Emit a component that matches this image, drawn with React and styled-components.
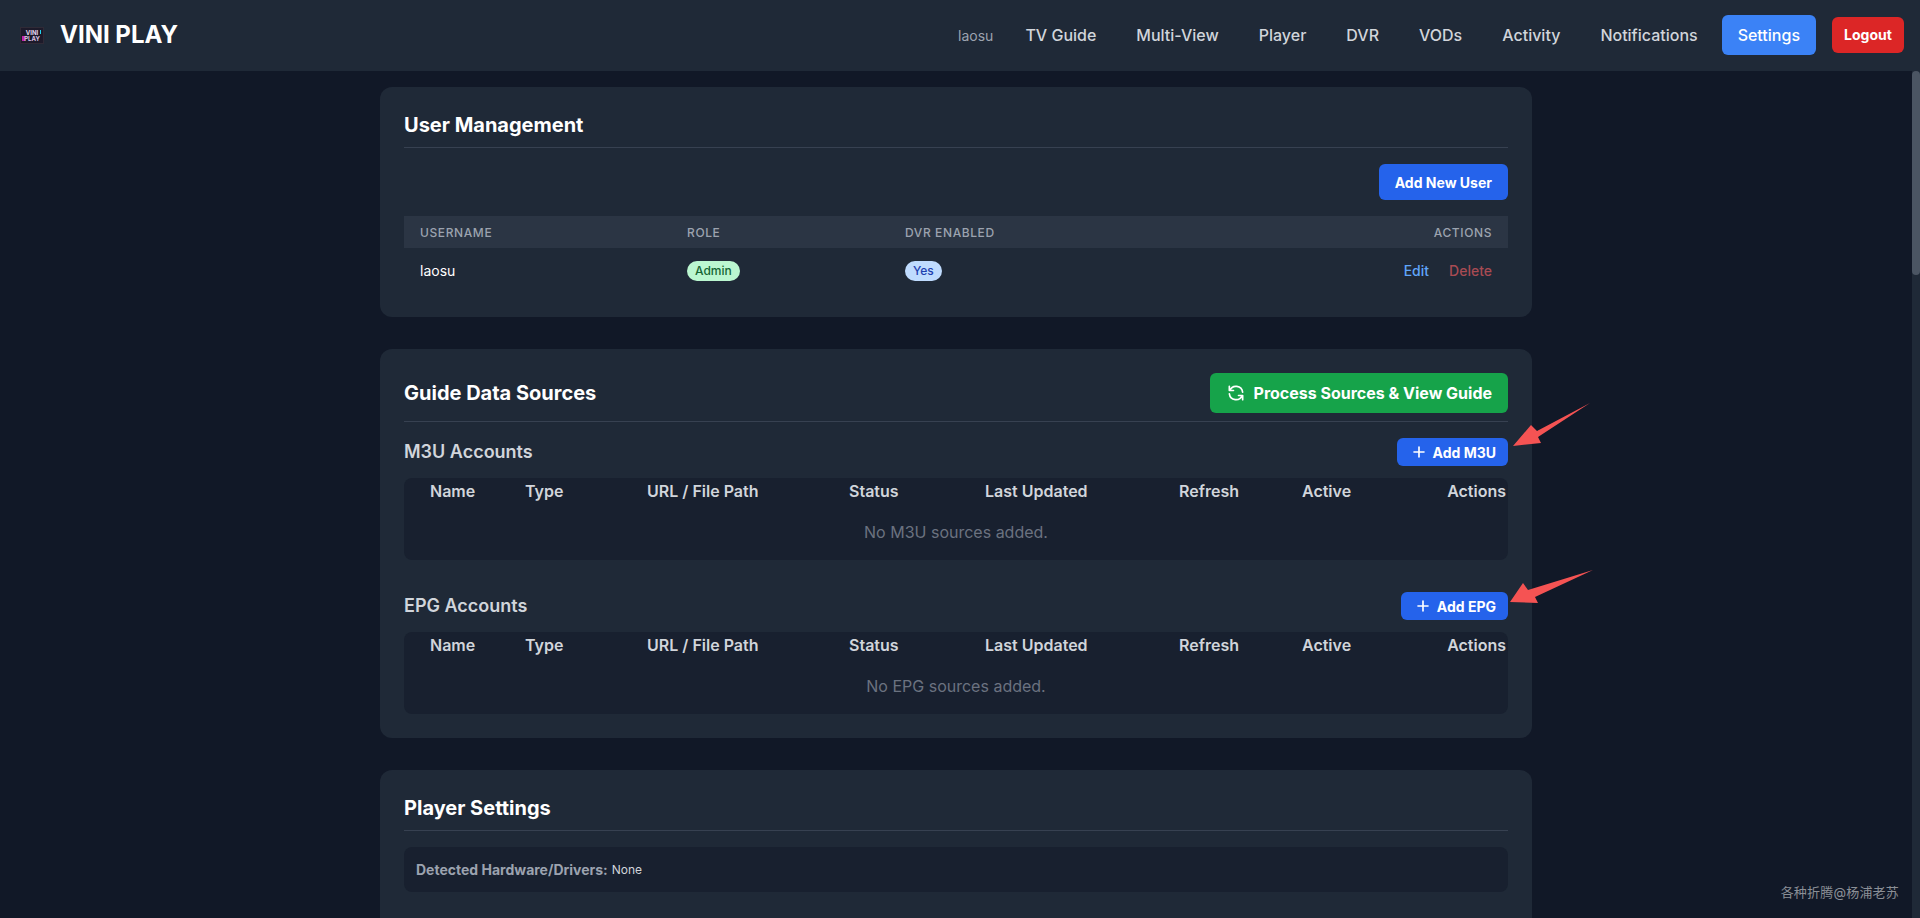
import React from 'react';
import styled, { createGlobalStyle } from 'styled-components';

const Global = createGlobalStyle`
  html, body { margin: 0; height: 100%; overflow: hidden; }
  body { font-family: Inter, "Noto Sans CJK SC", sans-serif; background: #111827; color: #e5e7eb; }
  * { box-sizing: border-box; }
`;

const Shell = styled.div`
  position: relative;
  height: 918px;
  display: flex;
  flex-direction: column;
  overflow: hidden;
`;

const Header = styled.header`
  flex: 0 0 71px;
  display: flex;
  align-items: center;
  justify-content: space-between;
  padding: 0 16px 1px 20px;
  background: #1f2937;
`;

const Brand = styled.div`
  display: flex;
  align-items: center;
  gap: 16px;
`;

const BrandName = styled.span`
  font-size: 24px;
  line-height: 32px;
  font-weight: 700;
  color: #fff;
`;

const Nav = styled.nav`
  display: flex;
  align-items: center;
  gap: 8px;
`;

const UserName = styled.span`
  font-size: 14px;
  color: #9ca3af;
  margin-right: 8px;
`;

const NavLink = styled.a`
  display: block;
  padding: 8px 16px;
  border-radius: 6px;
  font-size: 16px;
  line-height: 24px;
  font-weight: 500;
  color: ${p => (p.$active ? '#fff' : '#d1d5db')};
  background: ${p => (p.$active ? '#3b82f6' : 'transparent')};
`;

const LogoutButton = styled.button`
  margin-left: 8px;
  height: 36px;
  width: 72px;
  padding: 0;
  border: 0;
  border-radius: 6px;
  background: #dc2626;
  color: #fff;
  font: 700 14px/20px Inter, sans-serif;
`;

const Body = styled.div`
  flex: 1;
  min-height: 0;
  display: flex;
`;

const Main = styled.main`
  flex: 1;
  min-width: 0;
  overflow: hidden;
`;

const ScrollTrack = styled.div`
  flex: 0 0 8px;
  background: #1f2937;
`;

const ScrollThumb = styled.div`
  height: 204px;
  border-radius: 4px;
  background: #4b5563;
`;

const Page = styled.div`
  width: 1152px;
  margin: 0 auto;
  padding-top: 16px;
  display: flex;
  flex-direction: column;
  gap: 32px;
`;

const Card = styled.section`
  background: #1f2937;
  border-radius: 12px;
  padding: 24px;
  min-height: ${p => (p.$long ? '400px' : '0')};
`;

const CardHead = styled.div`
  display: flex;
  align-items: center;
  justify-content: space-between;
  padding-bottom: 8px;
  border-bottom: 1px solid #374151;
  margin-bottom: 16px;
`;

const CardTitle = styled.h2`
  margin: 0;
  font-size: 20px;
  line-height: 28px;
  font-weight: 700;
  color: #fff;
`;

const Toolbar = styled.div`
  display: flex;
  justify-content: flex-end;
  margin-bottom: 16px;
`;

const Button = styled.button`
  display: inline-flex;
  align-items: center;
  gap: ${p => (p.$small ? '4px' : '8px')};
  height: ${p => (p.$small ? '28px' : p.$tall ? '40px' : '36px')};
  padding: 0 ${p => (p.$small ? '12px' : '16px')};
  border: 0;
  border-radius: 6px;
  background: ${p => (p.$green ? '#16a34a' : '#2563eb')};
  color: #fff;
  font-family: Inter, sans-serif;
  font-weight: 700;
  font-size: ${p => (p.$tall ? '16px' : '14px')};
`;

const UserTable = styled.table`
  width: 100%;
  border-collapse: collapse;
  table-layout: fixed;
`;

const UserTh = styled.th`
  height: 32px;
  padding: 0 16px;
  background: #2b3544;
  font-size: 12px;
  font-weight: 500;
  letter-spacing: 0.6px;
  text-transform: uppercase;
  color: #9ca3af;
  text-align: ${p => (p.$right ? 'right' : 'left')};
`;

const UserTd = styled.td`
  height: 45px;
  padding: 0 16px;
  font-size: 14px;
  color: #fff;
  text-align: ${p => (p.$right ? 'right' : 'left')};
`;

const Badge = styled.span`
  display: inline-block;
  padding: 0 8px;
  border-radius: 999px;
  font-size: 12px;
  line-height: 20px;
  font-weight: 500;
  background: ${p => (p.$blue ? '#bfdbfe' : '#bbf7d0')};
  color: ${p => (p.$blue ? '#1e40af' : '#166534')};
`;

const ActionLink = styled.a`
  font-size: 14px;
  font-weight: 500;
  margin-left: 20px;
  color: ${p => (p.$danger ? '#a84b53' : '#60a5fa')};
`;

const SectionHead = styled.div`
  display: flex;
  align-items: center;
  justify-content: space-between;
  margin-bottom: 12px;
  margin-top: ${p => (p.$first ? '0' : '32px')};
`;

const SectionTitle = styled.h3`
  margin: 0;
  font-size: 18px;
  line-height: 28px;
  font-weight: 600;
  color: #d1d5db;
`;

const SourceWrap = styled.div`
  background: #18202f;
  border-radius: 8px;
  height: 82px;
  overflow: hidden;
`;

const SourceTable = styled.table`
  width: 100%;
  border-collapse: collapse;
  table-layout: fixed;
`;

const SourceTh = styled.th`
  height: 26px;
  padding: 0 ${p => (p.$right ? '2px' : '0')} 0 ${p => (p.$first ? '26px' : '0')};
  font-size: 16px;
  font-weight: 600;
  color: #d1d5db;
  text-align: ${p => (p.$right ? 'right' : 'left')};
`;

const EmptyCell = styled.td`
  height: 56px;
  padding: 0;
  font-size: 16px;
  text-align: center;
  color: #6b7280;
`;

const InfoBox = styled.div`
  height: 45px;
  display: flex;
  align-items: center;
  gap: 4px;
  padding: 0 12px;
  border-radius: 8px;
  background: #18202f;
`;

const InfoLabel = styled.span`
  font-size: 14px;
  font-weight: 700;
  color: #9ca3af;
`;

const InfoValue = styled.span`
  font-size: 12px;
  color: #d1d5db;
`;

const Watermark = styled.div`
  position: absolute;
  right: 21px;
  bottom: 17px;
  font-size: 13px;
  line-height: 18px;
  letter-spacing: 0.2px;
  color: #8b8f96;
`;

const ArrowLayer = styled.svg`
  position: absolute;
  left: 0;
  top: 0;
  pointer-events: none;
`;

const Logo = () => (
  <svg width="24" height="17" viewBox="0 0 24 17" aria-hidden="true">
    <rect width="24" height="17" fill="#2f2a36" />
    <rect x="1" y="1" width="22" height="15" fill="#1d1a2a" />
    <rect x="2" y="9" width="3" height="5" fill="#c026a8" />
    <rect x="20" y="3" width="1" height="4" fill="#22d3ee" />
    <text x="12" y="7.5" fontSize="6" fontWeight="700" textAnchor="middle" fill="#e6d7f0" fontFamily="Inter">VINI</text>
    <text x="12" y="13.5" fontSize="6" fontWeight="700" textAnchor="middle" fill="#d9c4e6" fontFamily="Inter">PLAY</text>
  </svg>
);

const Icon = ({ d }) => (
  <svg width="20" height="20" viewBox="0 0 24 24" fill="none" stroke="currentColor" strokeWidth="2" strokeLinecap="round" strokeLinejoin="round" aria-hidden="true">
    <path d={d} />
  </svg>
);

const REFRESH = 'M4 4v5h.582m15.356 2A8.001 8.001 0 004.582 9m0 0H9m11 11v-5h-.581m0 0a8.003 8.003 0 01-15.357-2m15.357 2H15';
const PLUS = 'M12 6v6m0 0v6m0-6h6m-6 0H6';

const heads = ['Name', 'Type', 'URL / File Path', 'Status', 'Last Updated', 'Refresh', 'Active', 'Actions'];

const Sources = ({ empty }) => (
  <SourceWrap>
    <SourceTable>
      <colgroup>
        {[121, 122, 202, 136, 194, 123, 145, 61].map((w, i) => <col key={i} width={w} />)}
      </colgroup>
      <thead>
        <tr>
          {heads.map((h, i) => (
            <SourceTh key={h} $first={i === 0} $right={i === 7}>{h}</SourceTh>
          ))}
        </tr>
      </thead>
      <tbody>
        <tr><EmptyCell colSpan={8}>{empty}</EmptyCell></tr>
      </tbody>
    </SourceTable>
  </SourceWrap>
);

export default function App() {
  return (
    <Shell>
      <Global />
      <Header>
        <Brand>
          <Logo />
          <BrandName>VINI PLAY</BrandName>
        </Brand>
        <Nav>
          <UserName>laosu</UserName>
          <NavLink>TV Guide</NavLink>
          <NavLink>Multi-View</NavLink>
          <NavLink>Player</NavLink>
          <NavLink>DVR</NavLink>
          <NavLink>VODs</NavLink>
          <NavLink>Activity</NavLink>
          <NavLink>Notifications</NavLink>
          <NavLink $active>Settings</NavLink>
          <LogoutButton>Logout</LogoutButton>
        </Nav>
      </Header>
      <Body>
        <Main>
          <Page>
            <Card>
              <CardHead><CardTitle>User Management</CardTitle></CardHead>
              <Toolbar><Button>Add New User</Button></Toolbar>
              <UserTable>
                <colgroup><col width="267" /><col width="218" /><col width="300" /><col /></colgroup>
                <thead>
                  <tr>
                    <UserTh>Username</UserTh>
                    <UserTh>Role</UserTh>
                    <UserTh>DVR Enabled</UserTh>
                    <UserTh $right>Actions</UserTh>
                  </tr>
                </thead>
                <tbody>
                  <tr>
                    <UserTd>laosu</UserTd>
                    <UserTd><Badge>Admin</Badge></UserTd>
                    <UserTd><Badge $blue>Yes</Badge></UserTd>
                    <UserTd $right>
                      <ActionLink>Edit</ActionLink>
                      <ActionLink $danger>Delete</ActionLink>
                    </UserTd>
                  </tr>
                </tbody>
              </UserTable>
            </Card>
            <Card>
              <CardHead>
                <CardTitle>Guide Data Sources</CardTitle>
                <Button $green $tall><Icon d={REFRESH} />Process Sources &amp; View Guide</Button>
              </CardHead>
              <SectionHead $first>
                <SectionTitle>M3U Accounts</SectionTitle>
                <Button $small><Icon d={PLUS} />Add M3U</Button>
              </SectionHead>
              <Sources empty="No M3U sources added." />
              <SectionHead>
                <SectionTitle>EPG Accounts</SectionTitle>
                <Button $small><Icon d={PLUS} />Add EPG</Button>
              </SectionHead>
              <Sources empty="No EPG sources added." />
            </Card>
            <Card $long>
              <CardHead><CardTitle>Player Settings</CardTitle></CardHead>
              <InfoBox>
                <InfoLabel>Detected Hardware/Drivers:</InfoLabel>
                <InfoValue>None</InfoValue>
              </InfoBox>
            </Card>
          </Page>
        </Main>
        <ScrollTrack><ScrollThumb /></ScrollTrack>
      </Body>
      <ArrowLayer width="1920" height="918" viewBox="0 0 1920 918" aria-hidden="true">
        <polygon points="1513,446 1531,425 1537,431 1590,403 1538,437 1541,443" fill="#f55353" />
        <polygon points="1510,602 1523,583 1528,590 1593,570 1535,597 1538,603" fill="#f55353" />
      </ArrowLayer>
      <Watermark>各种折腾@杨浦老苏</Watermark>
    </Shell>
  );
}
